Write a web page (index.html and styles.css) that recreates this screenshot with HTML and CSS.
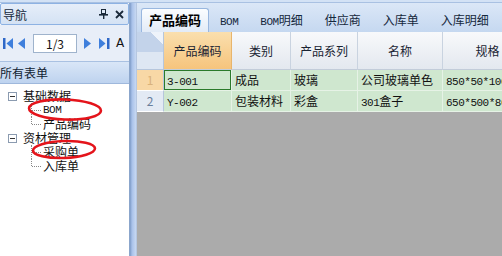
FILE: index.html
```html
<!DOCTYPE html>
<html lang="zh-CN">
<head>
  <meta charset="UTF-8">
  <title>表单</title>
  <link rel="stylesheet" href="styles.css">
</head>
<body>
  <div class="topbar"></div>
  <div class="workspace">
    <aside class="nav">
      <div class="pane-head">
        <span class="pane-title">导航</span>
        <span class="pane-tools">
          <svg class="pin" width="9" height="10" viewBox="0 0 9 10">
            <rect x="2.5" y="0.5" width="4" height="4" fill="none" stroke="#1b2a3a"/>
            <rect x="0" y="5" width="9" height="1.6" fill="#1b2a3a"/>
            <rect x="4" y="6" width="1.4" height="4" fill="#1b2a3a"/>
          </svg>
          <svg class="close" width="9" height="9" viewBox="0 0 9 9">
            <path d="M1 1 L8 8 M8 1 L1 8" stroke="#1b2a3a" stroke-width="1.8"/>
          </svg>
        </span>
      </div>

      <div class="pager">
        <svg class="pg-first" width="10" height="11" viewBox="0 0 10 11">
          <rect x="0" y="0" width="2.5" height="11" fill="#2f68c8"/>
          <polygon points="10,0 3.5,5.5 10,11" fill="#3f7fdc"/>
        </svg>
        <svg class="pg-prev" width="7" height="11" viewBox="0 0 7 11">
          <polygon points="7,0 0,5.5 7,11" fill="#3f7fdc"/>
        </svg>
        <input class="pg-box" type="text" value="1/3" readonly>
        <svg class="pg-next" width="7" height="11" viewBox="0 0 7 11">
          <polygon points="0,0 7,5.5 0,11" fill="#3f7fdc"/>
        </svg>
        <svg class="pg-last" width="11" height="11" viewBox="0 0 11 11">
          <polygon points="0,0 6.5,5.5 0,11" fill="#3f7fdc"/>
          <rect x="8" y="0" width="2.5" height="11" fill="#2f68c8"/>
        </svg>
        <span class="pg-a">A</span>
      </div>

      <div class="section-head">所有表单</div>

      <div class="tree">
        <div class="node root"><span class="toggle"></span>基础数据</div>
        <div class="group">
          <div class="node leaf"><span class="mono">BOM</span></div>
          <div class="node leaf">产品编码</div>
        </div>
        <div class="node root"><span class="toggle"></span>资材管理</div>
        <div class="group">
          <div class="node leaf">采购单</div>
          <div class="node leaf">入库单</div>
        </div>

        <svg class="marks" width="129" height="90" viewBox="0 0 129 90">
          <ellipse cx="65" cy="25.5" rx="36" ry="10" transform="rotate(2 65 25.5)" fill="none" stroke="#e4141b" stroke-width="2.6"/>
          <ellipse cx="64" cy="65.5" rx="31" ry="8.5" transform="rotate(-2 64 65.5)" fill="none" stroke="#e4141b" stroke-width="2.6"/>
        </svg>
      </div>
    </aside>

    <div class="splitter"></div>

    <main class="main">
      <div class="tabs">
        <span class="tab active">产品编码</span>
        <span class="tab"><span class="mono">BOM</span></span>
        <span class="tab"><span class="mono">BOM</span>明细</span>
        <span class="tab">供应商</span>
        <span class="tab">入库单</span>
        <span class="tab">入库明细</span>
      </div>

      <div class="grid">
        <div class="corner"></div>
        <div class="head sel">产品编码</div>
        <div class="head">类别</div>
        <div class="head">产品系列</div>
        <div class="head">名称</div>
        <div class="head">规格</div>

        <div class="rowhead cur">1</div>
        <div class="cell focus"><span class="mono">3-001</span></div>
        <div class="cell">成品</div>
        <div class="cell">玻璃</div>
        <div class="cell">公司玻璃单色</div>
        <div class="cell"><span class="mono">850*50*100</span></div>

        <div class="rowhead">2</div>
        <div class="cell"><span class="mono">Y-002</span></div>
        <div class="cell">包装材料</div>
        <div class="cell">彩盒</div>
        <div class="cell"><span class="mono">301</span>盒子</div>
        <div class="cell"><span class="mono">650*500*80</span></div>
      </div>
    </main>
  </div>
</body>
</html>
```

FILE: styles.css
```css
body {
  margin: 0;
  width: 502px;
  height: 256px;
  overflow: hidden;
  background: #ababab;
  font-family: "Noto Sans CJK SC", "DejaVu Sans", sans-serif;
  font-size: 12px;
  color: #111;
}

.mono {
  font-family: "Liberation Mono", monospace;
  font-size: 11px;
  letter-spacing: -0.5px;
}

.topbar {
  height: 2px;
  background: #d3e2f5;
  border-bottom: 1px solid #a9c1e2;
}

.workspace {
  display: flex;
  height: 253px;
}

/* left navigation pane */
.nav {
  width: 129px;
  border-right: 1px solid #8ba6cc;
  background: #fff;
  display: flex;
  flex-direction: column;
}

.pane-head {
  height: 20px;
  border: 1px solid #8db2e3;
  border-radius: 2px;
  background: linear-gradient(#e6eef9, #d4e2f4);
  display: flex;
  align-items: center;
  justify-content: space-between;
  padding: 0 4px 0 2px;
}

.pane-title {
  color: #15283c;
}

.pane-tools {
  display: flex;
  align-items: center;
  gap: 7px;
}

.pager {
  height: 36px;
  background: #e8eef8;
  display: flex;
  align-items: center;
  padding-left: 3px;
}

.pg-prev { margin-left: 5px; }

.pg-box {
  margin-left: 8px;
  width: 44px;
  height: 19px;
  box-sizing: border-box;
  border: 1px solid #9fb3cc;
  padding: 0;
  text-align: center;
  font: 12px "Noto Sans CJK SC", sans-serif;
  color: #111;
  background: #fff;
}

.pg-next { margin-left: 7px; }
.pg-last { margin-left: 8px; }

.pg-a {
  margin-left: 6px;
  font-family: "DejaVu Sans", sans-serif;
  font-size: 12px;
}

.section-head {
  height: 21px;
  line-height: 21px;
  background: linear-gradient(#d9e6f7, #bed3ef);
  border-top: 1px solid #a9c1e2;
  border-bottom: 1px solid #9fb8dc;
  color: #101c30;
}

.tree {
  position: relative;
  flex: 1;
  padding-top: 5px;
}

.node {
  height: 14px;
  line-height: 14px;
  display: flex;
  align-items: center;
  white-space: nowrap;
}

.root {
  padding-left: 8px;
}

.toggle {
  width: 7px;
  height: 7px;
  border: 1px solid #8b9bb0;
  margin-right: 6px;
  position: relative;
  background: #fff;
}

.toggle::after {
  content: "";
  position: absolute;
  left: 1px;
  right: 1px;
  top: 3px;
  border-top: 1px solid #333;
}

.leaf {
  position: relative;
  padding-left: 43px;
}

.leaf::before {
  content: "";
  position: absolute;
  left: 31px;
  top: 0;
  bottom: 0;
  border-left: 1px dotted #888;
}

.leaf:last-child::before {
  bottom: 7px;
}

.leaf::after {
  content: "";
  position: absolute;
  left: 32px;
  width: 9px;
  top: 7px;
  border-top: 1px dotted #888;
}

.marks {
  position: absolute;
  left: 0;
  top: 0;
}

.splitter {
  width: 7px;
  background: linear-gradient(to right, #7f9cc8, #a9c2ea 30%, #c4d6f1 80%, #aebfd8);
}

/* right side: tabs and grid */
.main {
  flex: 1;
  overflow: hidden;
}

.tabs {
  height: 29px;
  box-sizing: border-box;
  background: linear-gradient(#dbe7f7, #c5d8f0);
  display: flex;
  align-items: flex-end;
  padding-left: 4px;
}

.tab {
  height: 23px;
  line-height: 21px;
  padding: 0 11px;
  color: #15283c;
  white-space: nowrap;
}

.active {
  padding: 0 7px;
  border: 1px solid #99b7df;
  border-bottom: none;
  border-radius: 3px 3px 0 0;
  background: linear-gradient(#fbfdff, #e2ebf7);
  font-weight: bold;
  font-size: 13px;
  color: #000;
}

.grid {
  display: grid;
  grid-template-columns: 27px 68px 59px 67px 85px 90px;
  grid-template-rows: 38px 21px 21px;
  width: max-content;
}

.grid > div {
  box-sizing: border-box;
  white-space: nowrap;
  overflow: hidden;
}

.corner {
  border-right: 1px solid #b6c6dc;
  border-bottom: 1px solid #b6c6dc;
  background:
    linear-gradient(225deg, #eef3fa 0 9px, transparent 9px) top right / 16px 16px no-repeat,
    linear-gradient(#c3d3ea 0 55%, #dee7f3 55%);
}

.head {
  display: flex;
  align-items: center;
  justify-content: center;
  border-right: 1px solid #c9d3e0;
  border-bottom: 1px solid #c2ccd9;
  background: linear-gradient(#f8f9fb, #e3e8ef);
  color: #1a2433;
}

.head.sel {
  background: linear-gradient(#fadfae, #f6c47c);
  border-right-color: #e8b56c;
}

.rowhead {
  text-align: center;
  line-height: 20px;
  border-right: 1px solid #b6c6dc;
  border-bottom: 1px solid #fff;
  background: #e3eaf4;
  color: #6a7f9c;
}

.rowhead.cur {
  background: #f8d8a6;
  color: #d9b27c;
}

.cell {
  padding-left: 3px;
  line-height: 20px;
  border-right: 1px solid #e6f2e6;
  border-bottom: 1px solid #e6f2e6;
  background: #cfe7cf;
  color: #111;
}

.cell.focus {
  box-shadow: inset 0 0 0 1px #2b7a2b;
}
```
